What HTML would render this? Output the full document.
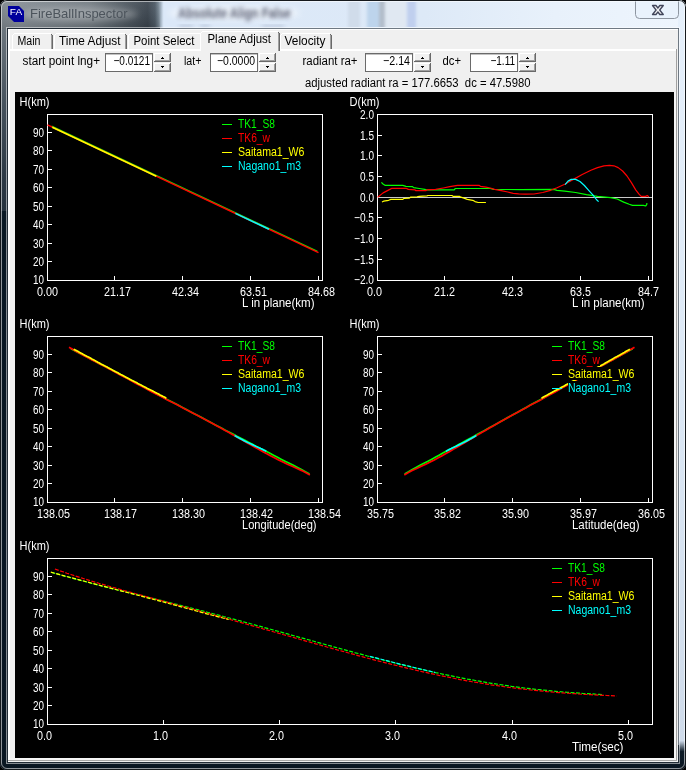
<!DOCTYPE html>
<html><head><meta charset="utf-8"><title>FireBallInspector</title>
<style>
html,body{margin:0;padding:0;background:#000;overflow:hidden}
svg{display:block;font-family:"Liberation Sans", sans-serif;will-change:transform}
text{white-space:pre}
</style></head><body>
<svg width="686" height="770" viewBox="0 0 686 770">
<defs>
<clipPath id="win"><rect x="0" y="0" width="686" height="770" rx="7" ry="7"/></clipPath>
<linearGradient id="gTitle" x1="0" y1="0" x2="164" y2="0" gradientUnits="userSpaceOnUse">
<stop offset="0" stop-color="#7b848b"/><stop offset="0.12" stop-color="#858d94"/><stop offset="0.55" stop-color="#6f787f"/>
<stop offset="0.78" stop-color="#4a545d"/><stop offset="0.9" stop-color="#38424c"/><stop offset="0.945" stop-color="#4a5763"/><stop offset="0.965" stop-color="#6f7f8c"/><stop offset="0.995" stop-color="#d5e3f3"/><stop offset="1" stop-color="#dae7f6"/>
</linearGradient>
<linearGradient id="gTitleV" x1="0" y1="0" x2="0" y2="29" gradientUnits="userSpaceOnUse">
<stop offset="0" stop-color="#fff" stop-opacity="0.08"/><stop offset="1" stop-color="#000" stop-opacity="0.12"/>
</linearGradient>
<linearGradient id="gLeft" x1="0" y1="29" x2="0" y2="770" gradientUnits="userSpaceOnUse">
<stop offset="0" stop-color="#6c767e"/><stop offset="0.1" stop-color="#47535e"/><stop offset="0.2" stop-color="#2c3844"/><stop offset="0.2455" stop-color="#26323e"/><stop offset="0.2457" stop-color="#0a1824"/><stop offset="1" stop-color="#0a1622"/>
</linearGradient>
<linearGradient id="gRight" x1="0" y1="0" x2="0" y2="770" gradientUnits="userSpaceOnUse">
<stop offset="0" stop-color="#e6f0fb"/><stop offset="0.5" stop-color="#dce8f5"/><stop offset="0.962" stop-color="#cfdbea"/><stop offset="0.976" stop-color="#0c1a26"/><stop offset="1" stop-color="#0a1622"/>
</linearGradient>
<linearGradient id="gPale" x1="164" y1="0" x2="686" y2="0" gradientUnits="userSpaceOnUse">
<stop offset="0" stop-color="#dbe8f8"/><stop offset="0.5" stop-color="#dde9f7"/><stop offset="0.75" stop-color="#e8f1fb"/><stop offset="1" stop-color="#eef5fd"/>
</linearGradient>
<filter id="blur3" x="-20%" y="-50%" width="140%" height="200%"><feGaussianBlur stdDeviation="3"/></filter>
<filter id="blur1" x="-30%" y="-10%" width="160%" height="120%"><feGaussianBlur stdDeviation="1.6 0"/></filter>
<filter id="blur2" x="-20%" y="-50%" width="140%" height="200%"><feGaussianBlur stdDeviation="2"/></filter>
</defs>
<rect width="686" height="770" fill="#000"/>
<g clip-path="url(#win)">

<rect x="0" y="0" width="686" height="770" fill="url(#gPale)"/>
<rect x="0" y="0" width="164" height="29" fill="url(#gTitle)"/>
<rect x="0" y="0" width="160" height="29" fill="url(#gTitleV)"/>
<rect x="0" y="29" width="8" height="741" fill="url(#gLeft)"/>
<rect x="678" y="0" width="8" height="770" fill="url(#gRight)"/>
<rect x="0" y="762" width="686" height="8" fill="#0a1622"/>
<ellipse cx="80" cy="14" rx="58" ry="7" fill="#fff" opacity="0.28" filter="url(#blur3)"/>
<ellipse cx="234" cy="13" rx="66" ry="7" fill="#fff" opacity="0.55" filter="url(#blur3)"/>
<g filter="url(#blur2)" opacity="0.5"><rect x="179" y="25" width="14" height="2" fill="#7f8aa8"/><rect x="200" y="25" width="10" height="2" fill="#7f8aa8"/><rect x="262" y="25" width="22" height="2" fill="#7f8aa8"/></g>
<g filter="url(#blur2)" opacity="0.95">
<text x="178" y="18.3" fill="#4d5268" font-size="14" text-anchor="start" textLength="113" lengthAdjust="spacingAndGlyphs" font-weight="bold">Absolute Align False</text>
</g>
<g filter="url(#blur1)">
<rect x="348" y="2" width="12" height="25" fill="#d0dcea"/>
<rect x="367" y="2" width="12" height="25" fill="#bdd4ec"/>
<rect x="379" y="2" width="6" height="25" fill="#b2bdca"/>
<rect x="385" y="2" width="21" height="25" fill="#e0e8f2"/>
<rect x="407" y="2" width="9" height="25" fill="#c0cfee"/>
</g>
<rect x="0.5" y="0.5" width="685" height="769" rx="6.5" ry="6.5" fill="none" stroke="#15191d"/>
<rect x="1.5" y="1.5" width="683" height="767" rx="5.5" ry="5.5" fill="none" stroke="#fff" stroke-opacity="0.55"/>
<rect x="6.5" y="27.5" width="673" height="736" fill="none" stroke="#fff" stroke-opacity="0.5"/>
<rect x="7.5" y="28.5" width="671" height="734" fill="none" stroke="#222c36"/>
<path d="M160 28.5H678.5V745" fill="none" stroke="#6f7983"/>
</g>
<path d="M8 6H19L24 11V22H14L8 16Z" fill="#00009c"/>
<text x="9.8" y="14.8" fill="#fff" font-size="9.5" text-anchor="start" textLength="12.3" lengthAdjust="spacingAndGlyphs">FA</text>
<text x="30" y="18.2" fill="#4c545c" font-size="13" text-anchor="start" textLength="97.5" lengthAdjust="spacingAndGlyphs">FireBallInspector</text>
<path d="M635.5 1.5V14.5Q635.5 18.5 639.5 18.5H674.5Q678.5 18.5 678.5 14.5V1.5" fill="#e9f2fc" stroke="#8d95a0"/>
<path d="M652.5 5.5H656L657.9 8L659.8 5.5H663.3L659.7 10L663.3 14.5H659.8L657.9 12L656 14.5H652.5L656.1 10Z" fill="#f0f0f2" stroke="#41455a" stroke-width="1.3" stroke-linejoin="round"/>
<rect x="8" y="29" width="670" height="733" fill="#f0f0f0"/>
<rect x="8" y="29" width="2" height="733" fill="#fff"/>
<rect x="8" y="29" width="670" height="1" fill="#fff"/>
<rect x="8" y="49" width="669" height="2" fill="#fff"/>
<rect x="676" y="49" width="1" height="712" fill="#a0a0a0"/>
<rect x="8" y="760" width="669" height="1" fill="#a8a8a8"/>
<rect x="10" y="758" width="666" height="2" fill="#f6f6f6"/>
<rect x="674" y="92" width="2" height="668" fill="#f6f6f6"/>
<rect x="12" y="33" width="41" height="16" fill="#f0f0f0"/>
<rect x="12" y="35" width="1" height="14" fill="#fff"/>
<rect x="14" y="33" width="37" height="1" fill="#fff"/>
<rect x="13" y="34" width="1" height="1" fill="#fff"/>
<rect x="51" y="35" width="1" height="14" fill="#a0a0a0"/>
<rect x="52" y="35" width="1" height="14" fill="#696969"/>
<rect x="51" y="34" width="1" height="1" fill="#696969"/>
<text x="17.5" y="45" fill="#000" font-size="12.5" text-anchor="start" textLength="23" lengthAdjust="spacingAndGlyphs">Main</text>
<rect x="54" y="33" width="73" height="16" fill="#f0f0f0"/>
<rect x="54" y="35" width="1" height="14" fill="#fff"/>
<rect x="56" y="33" width="69" height="1" fill="#fff"/>
<rect x="55" y="34" width="1" height="1" fill="#fff"/>
<rect x="125" y="35" width="1" height="14" fill="#a0a0a0"/>
<rect x="126" y="35" width="1" height="14" fill="#696969"/>
<rect x="125" y="34" width="1" height="1" fill="#696969"/>
<text x="59" y="45" fill="#000" font-size="12.5" text-anchor="start" textLength="61.5" lengthAdjust="spacingAndGlyphs">Time Adjust</text>
<rect x="128" y="33" width="74" height="16" fill="#f0f0f0"/>
<rect x="128" y="35" width="1" height="14" fill="#fff"/>
<rect x="130" y="33" width="70" height="1" fill="#fff"/>
<rect x="129" y="34" width="1" height="1" fill="#fff"/>
<rect x="200" y="35" width="1" height="14" fill="#a0a0a0"/>
<rect x="201" y="35" width="1" height="14" fill="#696969"/>
<rect x="200" y="34" width="1" height="1" fill="#696969"/>
<text x="133.5" y="45" fill="#000" font-size="12.5" text-anchor="start" textLength="61" lengthAdjust="spacingAndGlyphs">Point Select</text>
<rect x="280" y="33" width="52" height="16" fill="#f0f0f0"/>
<rect x="280" y="35" width="1" height="14" fill="#fff"/>
<rect x="282" y="33" width="48" height="1" fill="#fff"/>
<rect x="281" y="34" width="1" height="1" fill="#fff"/>
<rect x="330" y="35" width="1" height="14" fill="#a0a0a0"/>
<rect x="331" y="35" width="1" height="14" fill="#696969"/>
<rect x="330" y="34" width="1" height="1" fill="#696969"/>
<text x="284.5" y="45" fill="#000" font-size="12.5" text-anchor="start" textLength="41" lengthAdjust="spacingAndGlyphs">Velocity</text>
<rect x="200" y="31" width="80" height="20" fill="#f0f0f0"/>
<rect x="200" y="33" width="1" height="18" fill="#fff"/>
<rect x="202" y="31" width="76" height="1" fill="#fff"/>
<rect x="201" y="32" width="1" height="1" fill="#fff"/>
<rect x="278" y="33" width="1" height="18" fill="#a0a0a0"/>
<rect x="279" y="33" width="1" height="18" fill="#696969"/>
<rect x="278" y="32" width="1" height="1" fill="#696969"/>
<text x="207.5" y="43" fill="#000" font-size="12.5" text-anchor="start" textLength="63.5" lengthAdjust="spacingAndGlyphs">Plane Adjust</text>
<text x="22.5" y="65" fill="#000" font-size="12.5" text-anchor="start" textLength="77.5" lengthAdjust="spacingAndGlyphs">start point lng+</text>
<text x="184" y="65" fill="#000" font-size="12.5" text-anchor="start" textLength="17.5" lengthAdjust="spacingAndGlyphs">lat+</text>
<text x="302.5" y="65" fill="#000" font-size="12.5" text-anchor="start" textLength="55" lengthAdjust="spacingAndGlyphs">radiant ra+</text>
<text x="442.5" y="65" fill="#000" font-size="12.5" text-anchor="start" textLength="18.5" lengthAdjust="spacingAndGlyphs">dc+</text>
<text x="305" y="87" fill="#000" font-size="12.5" text-anchor="start" textLength="225.5" lengthAdjust="spacingAndGlyphs">adjusted radiant ra = 177.6653  dc = 47.5980</text>
<rect x="105.5" y="53.5" width="47" height="18" fill="#fff" stroke="#6a6a6a"/>
<rect x="106" y="54" width="46" height="1" fill="#9a9a9a" opacity="0.6"/>
<text x="150" y="65" fill="#000" font-size="12.5" text-anchor="end" textLength="36.5" lengthAdjust="spacingAndGlyphs">−0.0121</text>
<rect x="154" y="53" width="17" height="9" fill="#f0f0f0"/>
<rect x="154" y="53" width="16" height="1" fill="#fff"/>
<rect x="154" y="53" width="1" height="8" fill="#fff"/>
<rect x="155" y="60" width="15" height="1" fill="#a0a0a0"/>
<rect x="169" y="54" width="1" height="7" fill="#a0a0a0"/>
<rect x="154" y="61" width="17" height="1" fill="#696969"/>
<rect x="170" y="53" width="1" height="9" fill="#696969"/>
<rect x="162" y="57" width="1" height="1" fill="#000"/><rect x="161" y="58" width="3" height="1" fill="#000"/>
<rect x="154" y="63" width="17" height="9" fill="#f0f0f0"/>
<rect x="154" y="63" width="16" height="1" fill="#fff"/>
<rect x="154" y="63" width="1" height="8" fill="#fff"/>
<rect x="155" y="70" width="15" height="1" fill="#a0a0a0"/>
<rect x="169" y="64" width="1" height="7" fill="#a0a0a0"/>
<rect x="154" y="71" width="17" height="1" fill="#696969"/>
<rect x="170" y="63" width="1" height="9" fill="#696969"/>
<rect x="161" y="66" width="3" height="1" fill="#000"/><rect x="162" y="67" width="1" height="1" fill="#000"/>
<rect x="210.5" y="53.5" width="47" height="18" fill="#fff" stroke="#6a6a6a"/>
<rect x="211" y="54" width="46" height="1" fill="#9a9a9a" opacity="0.6"/>
<text x="255" y="65" fill="#000" font-size="12.5" text-anchor="end" textLength="38" lengthAdjust="spacingAndGlyphs">−0.0000</text>
<rect x="259" y="53" width="17" height="9" fill="#f0f0f0"/>
<rect x="259" y="53" width="16" height="1" fill="#fff"/>
<rect x="259" y="53" width="1" height="8" fill="#fff"/>
<rect x="260" y="60" width="15" height="1" fill="#a0a0a0"/>
<rect x="274" y="54" width="1" height="7" fill="#a0a0a0"/>
<rect x="259" y="61" width="17" height="1" fill="#696969"/>
<rect x="275" y="53" width="1" height="9" fill="#696969"/>
<rect x="267" y="57" width="1" height="1" fill="#000"/><rect x="266" y="58" width="3" height="1" fill="#000"/>
<rect x="259" y="63" width="17" height="9" fill="#f0f0f0"/>
<rect x="259" y="63" width="16" height="1" fill="#fff"/>
<rect x="259" y="63" width="1" height="8" fill="#fff"/>
<rect x="260" y="70" width="15" height="1" fill="#a0a0a0"/>
<rect x="274" y="64" width="1" height="7" fill="#a0a0a0"/>
<rect x="259" y="71" width="17" height="1" fill="#696969"/>
<rect x="275" y="63" width="1" height="9" fill="#696969"/>
<rect x="266" y="66" width="3" height="1" fill="#000"/><rect x="267" y="67" width="1" height="1" fill="#000"/>
<rect x="365.5" y="53.5" width="47" height="18" fill="#fff" stroke="#6a6a6a"/>
<rect x="366" y="54" width="46" height="1" fill="#9a9a9a" opacity="0.6"/>
<text x="410" y="65" fill="#000" font-size="12.5" text-anchor="end" textLength="27" lengthAdjust="spacingAndGlyphs">−2.14</text>
<rect x="414" y="53" width="17" height="9" fill="#f0f0f0"/>
<rect x="414" y="53" width="16" height="1" fill="#fff"/>
<rect x="414" y="53" width="1" height="8" fill="#fff"/>
<rect x="415" y="60" width="15" height="1" fill="#a0a0a0"/>
<rect x="429" y="54" width="1" height="7" fill="#a0a0a0"/>
<rect x="414" y="61" width="17" height="1" fill="#696969"/>
<rect x="430" y="53" width="1" height="9" fill="#696969"/>
<rect x="422" y="57" width="1" height="1" fill="#000"/><rect x="421" y="58" width="3" height="1" fill="#000"/>
<rect x="414" y="63" width="17" height="9" fill="#f0f0f0"/>
<rect x="414" y="63" width="16" height="1" fill="#fff"/>
<rect x="414" y="63" width="1" height="8" fill="#fff"/>
<rect x="415" y="70" width="15" height="1" fill="#a0a0a0"/>
<rect x="429" y="64" width="1" height="7" fill="#a0a0a0"/>
<rect x="414" y="71" width="17" height="1" fill="#696969"/>
<rect x="430" y="63" width="1" height="9" fill="#696969"/>
<rect x="421" y="66" width="3" height="1" fill="#000"/><rect x="422" y="67" width="1" height="1" fill="#000"/>
<rect x="470.5" y="53.5" width="47" height="18" fill="#fff" stroke="#6a6a6a"/>
<rect x="471" y="54" width="46" height="1" fill="#9a9a9a" opacity="0.6"/>
<text x="515" y="65" fill="#000" font-size="12.5" text-anchor="end" textLength="24.5" lengthAdjust="spacingAndGlyphs">−1.11</text>
<rect x="519" y="53" width="17" height="9" fill="#f0f0f0"/>
<rect x="519" y="53" width="16" height="1" fill="#fff"/>
<rect x="519" y="53" width="1" height="8" fill="#fff"/>
<rect x="520" y="60" width="15" height="1" fill="#a0a0a0"/>
<rect x="534" y="54" width="1" height="7" fill="#a0a0a0"/>
<rect x="519" y="61" width="17" height="1" fill="#696969"/>
<rect x="535" y="53" width="1" height="9" fill="#696969"/>
<rect x="527" y="57" width="1" height="1" fill="#000"/><rect x="526" y="58" width="3" height="1" fill="#000"/>
<rect x="519" y="63" width="17" height="9" fill="#f0f0f0"/>
<rect x="519" y="63" width="16" height="1" fill="#fff"/>
<rect x="519" y="63" width="1" height="8" fill="#fff"/>
<rect x="520" y="70" width="15" height="1" fill="#a0a0a0"/>
<rect x="534" y="64" width="1" height="7" fill="#a0a0a0"/>
<rect x="519" y="71" width="17" height="1" fill="#696969"/>
<rect x="535" y="63" width="1" height="9" fill="#696969"/>
<rect x="526" y="66" width="3" height="1" fill="#000"/><rect x="527" y="67" width="1" height="1" fill="#000"/>
<rect x="15" y="92" width="659" height="666" fill="#000"/>
<g shape-rendering="crispEdges" stroke="#fff" fill="none">
<rect x="47.5" y="114.5" width="275.0" height="166.0"/>
<path d="M47.5 261.5h4.5"/>
<path d="M47.5 243.5h4.5"/>
<path d="M47.5 224.5h4.5"/>
<path d="M47.5 206.5h4.5"/>
<path d="M47.5 187.5h4.5"/>
<path d="M47.5 169.5h4.5"/>
<path d="M47.5 150.5h4.5"/>
<path d="M47.5 132.5h4.5"/>
<path d="M114.5 280.5v-4.5"/>
<path d="M182.5 280.5v-4.5"/>
<path d="M250.5 280.5v-4.5"/>
<path d="M318.5 280.5v-4.5"/>
</g>
<text x="19.5" y="106" fill="#fff" font-size="12.5" text-anchor="start" textLength="30" lengthAdjust="spacingAndGlyphs">H(km)</text>
<text x="44" y="284" fill="#fff" font-size="12.5" text-anchor="end" textLength="11" lengthAdjust="spacingAndGlyphs">10</text>
<text x="44" y="266" fill="#fff" font-size="12.5" text-anchor="end" textLength="11" lengthAdjust="spacingAndGlyphs">20</text>
<text x="44" y="248" fill="#fff" font-size="12.5" text-anchor="end" textLength="11" lengthAdjust="spacingAndGlyphs">30</text>
<text x="44" y="229" fill="#fff" font-size="12.5" text-anchor="end" textLength="11" lengthAdjust="spacingAndGlyphs">40</text>
<text x="44" y="211" fill="#fff" font-size="12.5" text-anchor="end" textLength="11" lengthAdjust="spacingAndGlyphs">50</text>
<text x="44" y="192" fill="#fff" font-size="12.5" text-anchor="end" textLength="11" lengthAdjust="spacingAndGlyphs">60</text>
<text x="44" y="174" fill="#fff" font-size="12.5" text-anchor="end" textLength="11" lengthAdjust="spacingAndGlyphs">70</text>
<text x="44" y="155" fill="#fff" font-size="12.5" text-anchor="end" textLength="11" lengthAdjust="spacingAndGlyphs">80</text>
<text x="44" y="137" fill="#fff" font-size="12.5" text-anchor="end" textLength="11" lengthAdjust="spacingAndGlyphs">90</text>
<text x="37" y="296.0" fill="#fff" font-size="12.5" text-anchor="start" textLength="21" lengthAdjust="spacingAndGlyphs">0.00</text>
<text x="104" y="296.0" fill="#fff" font-size="12.5" text-anchor="start" textLength="27" lengthAdjust="spacingAndGlyphs">21.17</text>
<text x="172" y="296.0" fill="#fff" font-size="12.5" text-anchor="start" textLength="27" lengthAdjust="spacingAndGlyphs">42.34</text>
<text x="240" y="296.0" fill="#fff" font-size="12.5" text-anchor="start" textLength="27" lengthAdjust="spacingAndGlyphs">63.51</text>
<text x="308" y="296.0" fill="#fff" font-size="12.5" text-anchor="start" textLength="27" lengthAdjust="spacingAndGlyphs">84.68</text>
<text x="242.0" y="306.5" fill="#fff" font-size="12.5" text-anchor="start" textLength="72.5" lengthAdjust="spacingAndGlyphs">L in plane(km)</text>
<polyline points="51.5,126.2 317.3,251.4" fill="none" stroke="#00ff00" stroke-width="1.6" stroke-linejoin="round"/>
<polyline points="47.5,124.9 318.5,252.6" fill="none" stroke="#ff0000" stroke-width="1.6" stroke-linejoin="round"/>
<polyline points="52.3,127.2 156.3,176.2" fill="none" stroke="#ffff00" stroke-width="1.6" stroke-linejoin="round"/>
<polyline points="235.4,213.4 269.0,229.2" fill="none" stroke="#00ffff" stroke-width="1.6" stroke-linejoin="round"/>
<rect x="238" y="117" width="37" height="13" fill="#000"/>
<rect x="238" y="131" width="32" height="13" fill="#000"/>
<rect x="238" y="145" width="66.5" height="13" fill="#000"/>
<rect x="238" y="159" width="63" height="13" fill="#000"/>
<rect x="222" y="124" width="10" height="1" fill="#00ff00"/>
<text x="238" y="127.5" fill="#00ff00" font-size="12.5" text-anchor="start" textLength="37" lengthAdjust="spacingAndGlyphs">TK1_S8</text>
<rect x="222" y="138" width="10" height="1" fill="#ff0000"/>
<text x="238" y="141.5" fill="#ff0000" font-size="12.5" text-anchor="start" textLength="32" lengthAdjust="spacingAndGlyphs">TK6_w</text>
<rect x="222" y="152" width="10" height="1" fill="#ffff00"/>
<text x="238" y="155.5" fill="#ffff00" font-size="12.5" text-anchor="start" textLength="66.5" lengthAdjust="spacingAndGlyphs">Saitama1_W6</text>
<rect x="222" y="166" width="10" height="1" fill="#00ffff"/>
<text x="238" y="169.5" fill="#00ffff" font-size="12.5" text-anchor="start" textLength="63" lengthAdjust="spacingAndGlyphs">Nagano1_m3</text>
<g shape-rendering="crispEdges" stroke="#fff" fill="none">
<rect x="377.5" y="114.5" width="275.0" height="166.0"/>
<path d="M377.5 135.5h4.5"/>
<path d="M377.5 155.5h4.5"/>
<path d="M377.5 176.5h4.5"/>
<path d="M377.5 197.5h4.5"/>
<path d="M377.5 217.5h4.5"/>
<path d="M377.5 238.5h4.5"/>
<path d="M377.5 259.5h4.5"/>
<path d="M444.5 280.5v-4.5"/>
<path d="M512.5 280.5v-4.5"/>
<path d="M580.5 280.5v-4.5"/>
<path d="M648.5 280.5v-4.5"/>
</g>
<text x="349.5" y="106" fill="#fff" font-size="12.5" text-anchor="start" textLength="30" lengthAdjust="spacingAndGlyphs">D(km)</text>
<text x="374" y="119" fill="#fff" font-size="12.5" text-anchor="end" textLength="14" lengthAdjust="spacingAndGlyphs">2.0</text>
<text x="374" y="140" fill="#fff" font-size="12.5" text-anchor="end" textLength="14" lengthAdjust="spacingAndGlyphs">1.5</text>
<text x="374" y="160" fill="#fff" font-size="12.5" text-anchor="end" textLength="14" lengthAdjust="spacingAndGlyphs">1.0</text>
<text x="374" y="181" fill="#fff" font-size="12.5" text-anchor="end" textLength="14" lengthAdjust="spacingAndGlyphs">0.5</text>
<text x="374" y="202" fill="#fff" font-size="12.5" text-anchor="end" textLength="14" lengthAdjust="spacingAndGlyphs">0.0</text>
<text x="374" y="222" fill="#fff" font-size="12.5" text-anchor="end" textLength="20" lengthAdjust="spacingAndGlyphs">−0.5</text>
<text x="374" y="243" fill="#fff" font-size="12.5" text-anchor="end" textLength="20" lengthAdjust="spacingAndGlyphs">−1.0</text>
<text x="374" y="264" fill="#fff" font-size="12.5" text-anchor="end" textLength="20" lengthAdjust="spacingAndGlyphs">−1.5</text>
<text x="374" y="284" fill="#fff" font-size="12.5" text-anchor="end" textLength="20" lengthAdjust="spacingAndGlyphs">−2.0</text>
<text x="367" y="296.0" fill="#fff" font-size="12.5" text-anchor="start" textLength="15" lengthAdjust="spacingAndGlyphs">0.0</text>
<text x="434" y="296.0" fill="#fff" font-size="12.5" text-anchor="start" textLength="21" lengthAdjust="spacingAndGlyphs">21.2</text>
<text x="502" y="296.0" fill="#fff" font-size="12.5" text-anchor="start" textLength="21" lengthAdjust="spacingAndGlyphs">42.3</text>
<text x="570" y="296.0" fill="#fff" font-size="12.5" text-anchor="start" textLength="21" lengthAdjust="spacingAndGlyphs">63.5</text>
<text x="638" y="296.0" fill="#fff" font-size="12.5" text-anchor="start" textLength="21" lengthAdjust="spacingAndGlyphs">84.7</text>
<text x="572.0" y="306.5" fill="#fff" font-size="12.5" text-anchor="start" textLength="72.5" lengthAdjust="spacingAndGlyphs">L in plane(km)</text>
<rect x="378" y="197" width="274" height="1" fill="#c8c8c8"/>
<polyline points="381.4,182.4 383.0,184.0 385.3,185.4 402.8,185.4 406.0,186.3 412.6,186.7 413.7,187.6 419.2,188.5 424.7,189.4 426.9,189.8 454.2,189.8 455.3,188.5 490.3,188.5 493.6,189.4 520.0,189.6 553.7,189.4 557.0,190.3 564.7,191.2 575.6,192.5 586.5,194.7 597.5,196.4 610.6,197.7 617.2,199.0 623.7,202.1 629.2,204.3 632.5,205.4 643.4,205.4 645.6,206.0 646.7,204.7 646.9,203.0" fill="none" stroke="#00ff00" stroke-width="1.2" stroke-linejoin="round"/>
<polyline points="377.7,197.2 383.1,192.9 390.8,188.9 391.9,188.3 406.1,188.3 408.3,189.4 414.8,189.8 415.9,190.7 425.8,190.7 426.9,189.8 435.6,189.4 443.3,188.0 449.8,186.7 457.5,185.4 479.3,185.4 480.4,186.3 485.9,187.2 490.3,188.0 494.6,189.4 501.2,190.7 507.8,192.0 513.2,193.3 518.7,193.8 525.3,194.2 534.0,194.0 542.8,192.5 550.5,190.3 557.0,187.7 564.7,184.2 573.4,179.4 582.2,174.5 590.9,170.2 597.5,167.6 604.0,165.8 609.5,165.4 613.9,165.8 618.2,167.6 622.6,171.0 627.0,176.0 631.4,182.6 635.7,189.9 639.0,194.2 641.2,196.4 645.6,196.4 647.3,195.5 648.9,196.9" fill="none" stroke="#ff0000" stroke-width="1.2" stroke-linejoin="round"/>
<polyline points="382.0,202.0 383.6,201.2 388.6,200.3 390.8,199.4 402.8,199.4 403.9,198.5 409.4,198.1 410.5,197.2 417.0,196.8 419.2,196.4 426.9,195.9 428.0,195.5 452.0,195.5 453.1,196.4 459.7,196.4 460.8,197.2 464.0,198.1 467.3,199.4 472.8,200.3 475.0,201.6 478.2,202.5 485.9,202.5" fill="none" stroke="#ffff00" stroke-width="1.2" stroke-linejoin="round"/>
<polyline points="565.1,184.6 568.0,181.1 571.2,179.4 575.6,179.4 580.0,181.5 584.4,185.5 588.7,190.3 593.1,195.1 596.4,199.5 598.6,201.7" fill="none" stroke="#00ffff" stroke-width="1.2" stroke-linejoin="round"/>
<g shape-rendering="crispEdges" stroke="#fff" fill="none">
<rect x="47.5" y="336.5" width="275.0" height="166.0"/>
<path d="M47.5 483.5h4.5"/>
<path d="M47.5 465.5h4.5"/>
<path d="M47.5 446.5h4.5"/>
<path d="M47.5 428.5h4.5"/>
<path d="M47.5 409.5h4.5"/>
<path d="M47.5 391.5h4.5"/>
<path d="M47.5 372.5h4.5"/>
<path d="M47.5 354.5h4.5"/>
<path d="M114.5 502.5v-4.5"/>
<path d="M182.5 502.5v-4.5"/>
<path d="M250.5 502.5v-4.5"/>
<path d="M318.5 502.5v-4.5"/>
</g>
<text x="19.5" y="328" fill="#fff" font-size="12.5" text-anchor="start" textLength="30" lengthAdjust="spacingAndGlyphs">H(km)</text>
<text x="44" y="506" fill="#fff" font-size="12.5" text-anchor="end" textLength="11" lengthAdjust="spacingAndGlyphs">10</text>
<text x="44" y="488" fill="#fff" font-size="12.5" text-anchor="end" textLength="11" lengthAdjust="spacingAndGlyphs">20</text>
<text x="44" y="470" fill="#fff" font-size="12.5" text-anchor="end" textLength="11" lengthAdjust="spacingAndGlyphs">30</text>
<text x="44" y="451" fill="#fff" font-size="12.5" text-anchor="end" textLength="11" lengthAdjust="spacingAndGlyphs">40</text>
<text x="44" y="433" fill="#fff" font-size="12.5" text-anchor="end" textLength="11" lengthAdjust="spacingAndGlyphs">50</text>
<text x="44" y="414" fill="#fff" font-size="12.5" text-anchor="end" textLength="11" lengthAdjust="spacingAndGlyphs">60</text>
<text x="44" y="396" fill="#fff" font-size="12.5" text-anchor="end" textLength="11" lengthAdjust="spacingAndGlyphs">70</text>
<text x="44" y="377" fill="#fff" font-size="12.5" text-anchor="end" textLength="11" lengthAdjust="spacingAndGlyphs">80</text>
<text x="44" y="359" fill="#fff" font-size="12.5" text-anchor="end" textLength="11" lengthAdjust="spacingAndGlyphs">90</text>
<text x="37" y="518.0" fill="#fff" font-size="12.5" text-anchor="start" textLength="33" lengthAdjust="spacingAndGlyphs">138.05</text>
<text x="104" y="518.0" fill="#fff" font-size="12.5" text-anchor="start" textLength="33" lengthAdjust="spacingAndGlyphs">138.17</text>
<text x="172" y="518.0" fill="#fff" font-size="12.5" text-anchor="start" textLength="33" lengthAdjust="spacingAndGlyphs">138.30</text>
<text x="240" y="518.0" fill="#fff" font-size="12.5" text-anchor="start" textLength="33" lengthAdjust="spacingAndGlyphs">138.42</text>
<text x="308" y="518.0" fill="#fff" font-size="12.5" text-anchor="start" textLength="33" lengthAdjust="spacingAndGlyphs">138.54</text>
<text x="242.0" y="528.5" fill="#fff" font-size="12.5" text-anchor="start" textLength="74.5" lengthAdjust="spacingAndGlyphs">Longitude(deg)</text>
<polyline points="70.9,348.8 75.2,350.9 79.1,353.0 83.1,355.0 87.0,357.1 91.0,359.2 95.0,361.3 99.0,363.4 103.1,365.5 107.1,367.6 111.1,369.6 115.1,371.7 119.0,373.8 122.9,375.9 126.9,378.0 130.8,380.1 134.8,382.2 138.6,384.3 142.5,386.3 146.4,388.4 150.4,390.5 154.3,392.6 158.2,394.7 162.2,396.8 166.1,398.9 170.1,400.9 174.1,403.0 178.0,405.1 182.0,407.2 185.9,409.3 189.9,411.4 193.8,413.5 197.8,415.6 201.7,417.6 205.6,419.7 209.6,421.8 213.5,423.9 217.4,426.0 221.4,428.1 225.3,430.2 229.4,432.2 233.4,434.3 237.4,436.4 241.4,438.5 245.4,440.6 249.4,442.7 253.4,444.8 257.5,446.9 261.5,448.9 265.5,451.0 269.5,453.1 273.5,455.2 277.5,457.3 281.5,459.4 285.6,461.5 289.8,463.5 293.9,465.6 298.0,467.7 301.9,469.8 305.8,471.9 309.5,474.0" fill="none" stroke="#00ff00" stroke-width="1.7" stroke-linejoin="round"/>
<polyline points="69.0,347.2 72.6,349.3 76.3,351.5 80.1,353.6 84.1,355.7 88.1,357.8 92.1,360.0 96.2,362.1 100.3,364.2 104.4,366.3 108.4,368.5 112.3,370.6 116.3,372.7 120.3,374.9 124.3,377.0 128.2,379.1 132.1,381.2 136.0,383.4 140.0,385.5 144.0,387.6 148.0,389.8 152.0,391.9 156.1,394.0 160.2,396.1 164.3,398.3 168.4,400.4 172.6,402.5 176.7,404.6 180.8,406.8 184.9,408.9 189.0,411.0 193.1,413.2 197.2,415.3 201.2,417.4 205.2,419.5 209.2,421.7 213.1,423.8 217.0,425.9 220.9,428.0 224.7,430.2 228.5,432.3 232.3,434.4 236.1,436.6 239.9,438.7 243.6,440.8 247.3,442.9 251.1,445.1 254.9,447.2 258.7,449.3 262.5,451.4 266.4,453.6 270.4,455.7 274.4,457.8 278.6,460.0 282.9,462.1 287.4,464.2 292.2,466.3 297.0,468.5 301.7,470.6 305.9,472.7 309.9,474.9" fill="none" stroke="#ff0000" stroke-width="1.7" stroke-linejoin="round"/>
<polyline points="73.7,349.2 75.2,350.0 76.7,350.8 78.2,351.6 79.7,352.4 81.2,353.2 82.7,354.1 84.3,354.9 85.8,355.7 87.3,356.5 88.9,357.3 90.4,358.1 91.9,359.0 93.4,359.8 94.9,360.6 96.5,361.4 97.9,362.2 99.4,363.0 101.0,363.9 102.5,364.7 104.0,365.5 105.5,366.3 107.1,367.1 108.6,367.9 110.1,368.8 111.6,369.6 113.2,370.4 114.7,371.2 116.2,372.0 117.8,372.8 119.3,373.7 120.8,374.5 122.4,375.3 123.9,376.1 125.5,376.9 127.0,377.7 128.5,378.6 130.1,379.4 131.6,380.2 133.2,381.0 134.7,381.8 136.4,382.6 137.9,383.5 139.4,384.3 141.0,385.1 142.6,385.9 144.2,386.7 145.8,387.5 147.4,388.4 149.0,389.2 150.6,390.0 152.2,390.8 153.7,391.6 155.4,392.4 157.0,393.3 158.6,394.1 160.1,394.9 161.7,395.7 163.2,396.5 164.8,397.3 166.3,398.2" fill="none" stroke="#ffff00" stroke-width="1.7" stroke-linejoin="round"/>
<polyline points="234.6,435.4 235.1,435.7 235.5,435.9 235.9,436.2 236.3,436.4 236.8,436.7 237.2,437.0 237.7,437.2 238.2,437.5 238.6,437.8 239.1,438.0 239.6,438.3 240.1,438.6 240.6,438.8 241.1,439.1 241.6,439.3 242.1,439.6 242.6,439.9 243.1,440.1 243.6,440.4 244.1,440.7 244.6,440.9 245.2,441.2 245.7,441.5 246.2,441.7 246.7,442.0 247.3,442.2 247.8,442.5 248.4,442.8 248.9,443.0 249.5,443.3 250.0,443.6 250.6,443.8 251.1,444.1 251.7,444.4 252.3,444.6 252.8,444.9 253.4,445.1 253.9,445.4 254.5,445.7 255.1,445.9 255.6,446.2 256.2,446.5 256.8,446.7 257.3,447.0 257.9,447.3 258.5,447.5 259.0,447.8 259.6,448.0 260.2,448.3 260.7,448.6 261.3,448.8 261.9,449.1 262.5,449.4 263.0,449.6 263.6,449.9 264.2,450.2 264.8,450.4 265.3,450.7 265.9,451.0 266.4,451.2" fill="none" stroke="#00ffff" stroke-width="1.7" stroke-linejoin="round"/>
<rect x="238" y="339" width="37" height="13" fill="#000"/>
<rect x="238" y="353" width="32" height="13" fill="#000"/>
<rect x="238" y="367" width="66.5" height="13" fill="#000"/>
<rect x="238" y="381" width="63" height="13" fill="#000"/>
<rect x="222" y="346" width="10" height="1" fill="#00ff00"/>
<text x="238" y="349.5" fill="#00ff00" font-size="12.5" text-anchor="start" textLength="37" lengthAdjust="spacingAndGlyphs">TK1_S8</text>
<rect x="222" y="360" width="10" height="1" fill="#ff0000"/>
<text x="238" y="363.5" fill="#ff0000" font-size="12.5" text-anchor="start" textLength="32" lengthAdjust="spacingAndGlyphs">TK6_w</text>
<rect x="222" y="374" width="10" height="1" fill="#ffff00"/>
<text x="238" y="377.5" fill="#ffff00" font-size="12.5" text-anchor="start" textLength="66.5" lengthAdjust="spacingAndGlyphs">Saitama1_W6</text>
<rect x="222" y="388" width="10" height="1" fill="#00ffff"/>
<text x="238" y="391.5" fill="#00ffff" font-size="12.5" text-anchor="start" textLength="63" lengthAdjust="spacingAndGlyphs">Nagano1_m3</text>
<g shape-rendering="crispEdges" stroke="#fff" fill="none">
<rect x="377.5" y="336.5" width="275.0" height="166.0"/>
<path d="M377.5 483.5h4.5"/>
<path d="M377.5 465.5h4.5"/>
<path d="M377.5 446.5h4.5"/>
<path d="M377.5 428.5h4.5"/>
<path d="M377.5 409.5h4.5"/>
<path d="M377.5 391.5h4.5"/>
<path d="M377.5 372.5h4.5"/>
<path d="M377.5 354.5h4.5"/>
<path d="M444.5 502.5v-4.5"/>
<path d="M512.5 502.5v-4.5"/>
<path d="M580.5 502.5v-4.5"/>
<path d="M648.5 502.5v-4.5"/>
</g>
<text x="349.5" y="328" fill="#fff" font-size="12.5" text-anchor="start" textLength="30" lengthAdjust="spacingAndGlyphs">H(km)</text>
<text x="374" y="506" fill="#fff" font-size="12.5" text-anchor="end" textLength="11" lengthAdjust="spacingAndGlyphs">10</text>
<text x="374" y="488" fill="#fff" font-size="12.5" text-anchor="end" textLength="11" lengthAdjust="spacingAndGlyphs">20</text>
<text x="374" y="470" fill="#fff" font-size="12.5" text-anchor="end" textLength="11" lengthAdjust="spacingAndGlyphs">30</text>
<text x="374" y="451" fill="#fff" font-size="12.5" text-anchor="end" textLength="11" lengthAdjust="spacingAndGlyphs">40</text>
<text x="374" y="433" fill="#fff" font-size="12.5" text-anchor="end" textLength="11" lengthAdjust="spacingAndGlyphs">50</text>
<text x="374" y="414" fill="#fff" font-size="12.5" text-anchor="end" textLength="11" lengthAdjust="spacingAndGlyphs">60</text>
<text x="374" y="396" fill="#fff" font-size="12.5" text-anchor="end" textLength="11" lengthAdjust="spacingAndGlyphs">70</text>
<text x="374" y="377" fill="#fff" font-size="12.5" text-anchor="end" textLength="11" lengthAdjust="spacingAndGlyphs">80</text>
<text x="374" y="359" fill="#fff" font-size="12.5" text-anchor="end" textLength="11" lengthAdjust="spacingAndGlyphs">90</text>
<text x="367" y="518.0" fill="#fff" font-size="12.5" text-anchor="start" textLength="27" lengthAdjust="spacingAndGlyphs">35.75</text>
<text x="434" y="518.0" fill="#fff" font-size="12.5" text-anchor="start" textLength="27" lengthAdjust="spacingAndGlyphs">35.82</text>
<text x="502" y="518.0" fill="#fff" font-size="12.5" text-anchor="start" textLength="27" lengthAdjust="spacingAndGlyphs">35.90</text>
<text x="570" y="518.0" fill="#fff" font-size="12.5" text-anchor="start" textLength="27" lengthAdjust="spacingAndGlyphs">35.97</text>
<text x="638" y="518.0" fill="#fff" font-size="12.5" text-anchor="start" textLength="27" lengthAdjust="spacingAndGlyphs">36.05</text>
<text x="572.0" y="528.5" fill="#fff" font-size="12.5" text-anchor="start" textLength="67.5" lengthAdjust="spacingAndGlyphs">Latitude(deg)</text>
<polyline points="632.7,348.8 628.6,350.9 624.9,353.0 621.1,355.0 617.4,357.1 613.6,359.2 609.7,361.3 605.9,363.4 602.0,365.5 598.2,367.6 594.3,369.6 590.5,371.7 586.8,373.8 583.0,375.9 579.2,378.0 575.5,380.1 571.7,382.2 568.1,384.3 564.3,386.3 560.5,388.4 556.8,390.5 553.0,392.6 549.2,394.7 545.5,396.8 541.7,398.9 537.9,400.9 534.1,403.0 530.3,405.1 526.6,407.2 522.8,409.3 519.0,411.4 515.2,413.5 511.5,415.6 507.7,417.6 504.0,419.7 500.2,421.8 496.4,423.9 492.7,426.0 488.9,428.1 485.1,430.2 481.3,432.2 477.4,434.3 473.6,436.4 469.8,438.5 466.0,440.6 462.1,442.7 458.2,444.8 454.4,446.9 450.6,448.9 446.7,451.0 442.9,453.1 439.1,455.2 435.3,457.3 431.4,459.4 427.5,461.5 423.5,463.5 419.5,465.6 415.6,467.7 411.9,469.8 408.1,471.9 404.6,474.0" fill="none" stroke="#00ff00" stroke-width="1.7" stroke-linejoin="round"/>
<polyline points="634.5,347.2 631.1,349.3 627.5,351.5 623.9,353.6 620.1,355.7 616.3,357.8 612.5,360.0 608.5,362.1 604.6,364.2 600.7,366.3 596.8,368.5 593.1,370.6 589.3,372.7 585.5,374.9 581.7,377.0 578.0,379.1 574.2,381.2 570.5,383.4 566.7,385.5 562.9,387.6 559.0,389.8 555.2,391.9 551.4,394.0 547.4,396.1 543.5,398.3 539.6,400.4 535.6,402.5 531.6,404.6 527.7,406.8 523.8,408.9 519.8,411.0 515.9,413.2 512.0,415.3 508.2,417.4 504.4,419.5 500.5,421.7 496.8,423.8 493.1,425.9 489.4,428.0 485.7,430.2 482.1,432.3 478.4,434.4 474.9,436.6 471.3,438.7 467.7,440.8 464.2,442.9 460.6,445.1 457.0,447.2 453.3,449.3 449.7,451.4 446.0,453.6 442.2,455.7 438.3,457.8 434.3,460.0 430.2,462.1 425.8,464.2 421.3,466.3 416.7,468.5 412.2,470.6 408.1,472.7 404.3,474.9" fill="none" stroke="#ff0000" stroke-width="1.7" stroke-linejoin="round"/>
<polyline points="629.9,349.2 628.6,350.0 627.1,350.8 625.7,351.6 624.3,352.4 622.8,353.2 621.4,354.1 619.9,354.9 618.4,355.7 617.0,356.5 615.5,357.3 614.0,358.1 612.6,359.0 611.2,359.8 609.7,360.6 608.2,361.4 606.8,362.2 605.4,363.0 604.0,363.9 602.5,364.7 601.0,365.5 599.6,366.3 598.1,367.1 596.7,367.9 595.2,368.8 593.8,369.6 592.3,370.4 590.9,371.2 589.4,372.0 587.9,372.8 586.4,373.7 585.0,374.5 583.5,375.3 582.0,376.1 580.5,376.9 579.1,377.7 577.6,378.6 576.1,379.4 574.7,380.2 573.2,381.0 571.7,381.8 570.1,382.6 568.7,383.5 567.2,384.3 565.7,385.1 564.2,385.9 562.6,386.7 561.1,387.5 559.6,388.4 558.0,389.2 556.5,390.0 555.0,390.8 553.5,391.6 551.9,392.4 550.4,393.3 548.9,394.1 547.4,394.9 545.9,395.7 544.4,396.5 543.0,397.3 541.5,398.2" fill="none" stroke="#ffff00" stroke-width="1.7" stroke-linejoin="round"/>
<polyline points="476.3,435.4 475.9,435.7 475.5,435.9 475.1,436.2 474.7,436.4 474.2,436.7 473.8,437.0 473.4,437.2 472.9,437.5 472.5,437.8 472.0,438.0 471.6,438.3 471.1,438.6 470.6,438.8 470.1,439.1 469.7,439.3 469.2,439.6 468.7,439.9 468.2,440.1 467.7,440.4 467.2,440.7 466.7,440.9 466.2,441.2 465.7,441.5 465.2,441.7 464.7,442.0 464.2,442.2 463.7,442.5 463.1,442.8 462.6,443.0 462.1,443.3 461.6,443.6 461.0,443.8 460.5,444.1 460.0,444.4 459.4,444.6 458.9,444.9 458.3,445.1 457.8,445.4 457.2,445.7 456.7,445.9 456.2,446.2 455.6,446.5 455.1,446.7 454.5,447.0 454.0,447.3 453.4,447.5 452.9,447.8 452.4,448.0 451.8,448.3 451.3,448.6 450.7,448.8 450.2,449.1 449.6,449.4 449.0,449.6 448.5,449.9 447.9,450.2 447.4,450.4 446.9,450.7 446.3,451.0 445.8,451.2" fill="none" stroke="#00ffff" stroke-width="1.7" stroke-linejoin="round"/>
<rect x="568" y="339" width="37" height="13" fill="#000"/>
<rect x="568" y="353" width="32" height="13" fill="#000"/>
<rect x="568" y="367" width="66.5" height="13" fill="#000"/>
<rect x="568" y="381" width="63" height="13" fill="#000"/>
<rect x="552" y="346" width="10" height="1" fill="#00ff00"/>
<text x="568" y="349.5" fill="#00ff00" font-size="12.5" text-anchor="start" textLength="37" lengthAdjust="spacingAndGlyphs">TK1_S8</text>
<rect x="552" y="360" width="10" height="1" fill="#ff0000"/>
<text x="568" y="363.5" fill="#ff0000" font-size="12.5" text-anchor="start" textLength="32" lengthAdjust="spacingAndGlyphs">TK6_w</text>
<rect x="552" y="374" width="10" height="1" fill="#ffff00"/>
<text x="568" y="377.5" fill="#ffff00" font-size="12.5" text-anchor="start" textLength="66.5" lengthAdjust="spacingAndGlyphs">Saitama1_W6</text>
<rect x="552" y="388" width="10" height="1" fill="#00ffff"/>
<text x="568" y="391.5" fill="#00ffff" font-size="12.5" text-anchor="start" textLength="63" lengthAdjust="spacingAndGlyphs">Nagano1_m3</text>
<g shape-rendering="crispEdges" stroke="#fff" fill="none">
<rect x="47.5" y="558.5" width="605.0" height="166.0"/>
<path d="M47.5 705.5h4.5"/>
<path d="M47.5 687.5h4.5"/>
<path d="M47.5 668.5h4.5"/>
<path d="M47.5 650.5h4.5"/>
<path d="M47.5 631.5h4.5"/>
<path d="M47.5 613.5h4.5"/>
<path d="M47.5 594.5h4.5"/>
<path d="M47.5 576.5h4.5"/>
<path d="M163.5 724.5v-4.5"/>
<path d="M279.5 724.5v-4.5"/>
<path d="M395.5 724.5v-4.5"/>
<path d="M512.5 724.5v-4.5"/>
<path d="M628.5 724.5v-4.5"/>
</g>
<text x="19.5" y="550" fill="#fff" font-size="12.5" text-anchor="start" textLength="30" lengthAdjust="spacingAndGlyphs">H(km)</text>
<text x="44" y="728" fill="#fff" font-size="12.5" text-anchor="end" textLength="11" lengthAdjust="spacingAndGlyphs">10</text>
<text x="44" y="710" fill="#fff" font-size="12.5" text-anchor="end" textLength="11" lengthAdjust="spacingAndGlyphs">20</text>
<text x="44" y="692" fill="#fff" font-size="12.5" text-anchor="end" textLength="11" lengthAdjust="spacingAndGlyphs">30</text>
<text x="44" y="673" fill="#fff" font-size="12.5" text-anchor="end" textLength="11" lengthAdjust="spacingAndGlyphs">40</text>
<text x="44" y="655" fill="#fff" font-size="12.5" text-anchor="end" textLength="11" lengthAdjust="spacingAndGlyphs">50</text>
<text x="44" y="636" fill="#fff" font-size="12.5" text-anchor="end" textLength="11" lengthAdjust="spacingAndGlyphs">60</text>
<text x="44" y="618" fill="#fff" font-size="12.5" text-anchor="end" textLength="11" lengthAdjust="spacingAndGlyphs">70</text>
<text x="44" y="599" fill="#fff" font-size="12.5" text-anchor="end" textLength="11" lengthAdjust="spacingAndGlyphs">80</text>
<text x="44" y="581" fill="#fff" font-size="12.5" text-anchor="end" textLength="11" lengthAdjust="spacingAndGlyphs">90</text>
<text x="37" y="740.0" fill="#fff" font-size="12.5" text-anchor="start" textLength="15" lengthAdjust="spacingAndGlyphs">0.0</text>
<text x="153" y="740.0" fill="#fff" font-size="12.5" text-anchor="start" textLength="15" lengthAdjust="spacingAndGlyphs">1.0</text>
<text x="269" y="740.0" fill="#fff" font-size="12.5" text-anchor="start" textLength="15" lengthAdjust="spacingAndGlyphs">2.0</text>
<text x="385" y="740.0" fill="#fff" font-size="12.5" text-anchor="start" textLength="15" lengthAdjust="spacingAndGlyphs">3.0</text>
<text x="502" y="740.0" fill="#fff" font-size="12.5" text-anchor="start" textLength="15" lengthAdjust="spacingAndGlyphs">4.0</text>
<text x="618" y="740.0" fill="#fff" font-size="12.5" text-anchor="start" textLength="15" lengthAdjust="spacingAndGlyphs">5.0</text>
<text x="572.0" y="750.5" fill="#fff" font-size="12.5" text-anchor="start" textLength="51.5" lengthAdjust="spacingAndGlyphs">Time(sec)</text>
<polyline points="51.5,572.4 55.5,573.6 59.5,574.7 63.5,575.8 67.5,576.9 71.5,578.0 75.5,579.1 79.5,580.2 83.5,581.2 87.5,582.2 91.5,583.3 95.5,584.3 99.5,585.3 103.5,586.3 107.5,587.3 111.5,588.3 115.5,589.3 119.5,590.3 123.5,591.3 127.5,592.2 131.5,593.2 135.5,594.2 139.5,595.2 143.5,596.2 147.5,597.1 151.5,598.1 155.5,599.1 159.5,600.1 163.5,601.1 167.5,602.1 171.5,603.1 175.5,604.1 179.5,605.1 183.5,606.1 187.5,607.1 191.5,608.1 195.5,609.2 199.5,610.2 203.5,611.2 207.5,612.3 211.5,613.3 215.5,614.4 219.5,615.4 223.5,616.5 227.5,617.5 231.5,618.6 235.5,619.7 239.5,620.7 243.5,621.8 247.5,622.9 251.5,624.0 255.5,625.1 259.5,626.2 263.5,627.3 267.5,628.4 271.5,629.5 275.5,630.6 279.5,631.7 283.5,632.8 287.5,633.9 291.5,635.1 295.5,636.2 299.5,637.3 303.5,638.4 307.5,639.5 311.5,640.6 315.5,641.8 319.5,642.9 323.5,644.0 327.5,645.1 331.5,646.2 335.5,647.3 339.5,648.4 343.5,649.5 347.5,650.6 351.5,651.7 355.5,652.8 359.5,653.8 363.5,654.9 367.5,656.0 371.5,657.0 375.5,658.1 379.5,659.1 383.5,660.1 387.5,661.2 391.5,662.2 395.5,663.2 399.5,664.2 403.5,665.1 407.5,666.1 411.5,667.1 415.5,668.0 419.5,669.0 423.5,669.9 427.5,670.8 431.5,671.7 435.5,672.6 439.5,673.4 443.5,674.3 447.5,675.1 451.5,675.9 455.5,676.7 459.5,677.5 463.5,678.3 467.5,679.1 471.5,679.8 475.5,680.5 479.5,681.2 483.5,681.9 487.5,682.6 491.5,683.3 495.5,683.9 499.5,684.5 503.5,685.1 507.5,685.7 511.5,686.3 515.5,686.8 519.5,687.3 523.5,687.9 527.5,688.3 531.5,688.8 535.5,689.3 539.5,689.7 543.5,690.1 547.5,690.5 551.5,690.9 555.5,691.3 559.5,691.7 563.5,692.0 567.5,692.3 571.5,692.6 575.5,692.9 579.5,693.2 583.5,693.5 587.5,693.7 591.5,693.9 595.5,694.2 599.5,694.4 603.5,694.6" fill="none" stroke="#00ff00" stroke-width="1.2" stroke-linejoin="round" stroke-dasharray="4 1.5"/>
<polyline points="54.9,569.0 58.9,570.4 62.9,571.8 66.9,573.2 70.9,574.5 74.9,575.8 78.9,577.1 82.9,578.4 86.9,579.6 90.9,580.9 94.9,582.1 98.9,583.3 102.9,584.4 106.9,585.6 110.9,586.8 114.9,587.9 118.9,589.0 122.9,590.2 126.9,591.3 130.9,592.4 134.9,593.5 138.9,594.6 142.9,595.7 146.9,596.8 150.9,597.9 154.9,599.0 158.9,600.0 162.9,601.1 166.9,602.2 170.9,603.3 174.9,604.4 178.9,605.5 182.9,606.5 186.9,607.6 190.9,608.7 194.9,609.8 198.9,610.9 202.9,612.0 206.9,613.1 210.9,614.2 214.9,615.3 218.9,616.4 222.9,617.5 226.9,618.6 230.9,619.7 234.9,620.9 238.9,622.0 242.9,623.1 246.9,624.2 250.9,625.4 254.9,626.5 258.9,627.6 262.9,628.8 266.9,629.9 270.9,631.0 274.9,632.2 278.9,633.3 282.9,634.5 286.9,635.6 290.9,636.7 294.9,637.9 298.9,639.0 302.9,640.2 306.9,641.3 310.9,642.4 314.9,643.6 318.9,644.7 322.9,645.8 326.9,647.0 330.9,648.1 334.9,649.2 338.9,650.3 342.9,651.4 346.9,652.5 350.9,653.6 354.9,654.7 358.9,655.8 362.9,656.9 366.9,658.0 370.9,659.0 374.9,660.1 378.9,661.1 382.9,662.1 386.9,663.2 390.9,664.2 394.9,665.2 398.9,666.1 402.9,667.1 406.9,668.1 410.9,669.0 414.9,670.0 418.9,670.9 422.9,671.8 426.9,672.7 430.9,673.6 434.9,674.4 438.9,675.3 442.9,676.1 446.9,676.9 450.9,677.7 454.9,678.5 458.9,679.3 462.9,680.0 466.9,680.8 470.9,681.5 474.9,682.2 478.9,682.8 482.9,683.5 486.9,684.1 490.9,684.8 494.9,685.4 498.9,685.9 502.9,686.5 506.9,687.1 510.9,687.6 514.9,688.1 518.9,688.6 522.9,689.1 526.9,689.5 530.9,690.0 534.9,690.4 538.9,690.8 542.9,691.2 546.9,691.6 550.9,691.9 554.9,692.3 558.9,692.6 562.9,692.9 566.9,693.2 570.9,693.5 574.9,693.7 578.9,694.0 582.9,694.3 586.9,694.5 590.9,694.7 594.9,694.9 598.9,695.1 602.9,695.3 606.9,695.5 610.9,695.7 614.9,695.9 616.6,696.0" fill="none" stroke="#ff0000" stroke-width="1.2" stroke-linejoin="round" stroke-dasharray="4 1.5"/>
<polyline points="50.8,572.2 100.0,585.4 160.0,601.1 210.0,614.7 228.7,619.5" fill="none" stroke="#ffff00" stroke-width="1.2" stroke-linejoin="round" stroke-dasharray="4 1.5"/>
<polyline points="369.7,656.3 400.0,664.1 435.3,672.5" fill="none" stroke="#00ffff" stroke-width="1.2" stroke-linejoin="round" stroke-dasharray="4 1.5"/>
<rect x="568" y="561" width="37" height="13" fill="#000"/>
<rect x="568" y="575" width="32" height="13" fill="#000"/>
<rect x="568" y="589" width="66.5" height="13" fill="#000"/>
<rect x="568" y="603" width="63" height="13" fill="#000"/>
<rect x="552" y="568" width="10" height="1" fill="#00ff00"/>
<text x="568" y="571.5" fill="#00ff00" font-size="12.5" text-anchor="start" textLength="37" lengthAdjust="spacingAndGlyphs">TK1_S8</text>
<rect x="552" y="582" width="10" height="1" fill="#ff0000"/>
<text x="568" y="585.5" fill="#ff0000" font-size="12.5" text-anchor="start" textLength="32" lengthAdjust="spacingAndGlyphs">TK6_w</text>
<rect x="552" y="596" width="10" height="1" fill="#ffff00"/>
<text x="568" y="599.5" fill="#ffff00" font-size="12.5" text-anchor="start" textLength="66.5" lengthAdjust="spacingAndGlyphs">Saitama1_W6</text>
<rect x="552" y="610" width="10" height="1" fill="#00ffff"/>
<text x="568" y="613.5" fill="#00ffff" font-size="12.5" text-anchor="start" textLength="63" lengthAdjust="spacingAndGlyphs">Nagano1_m3</text>
</svg></body></html>
